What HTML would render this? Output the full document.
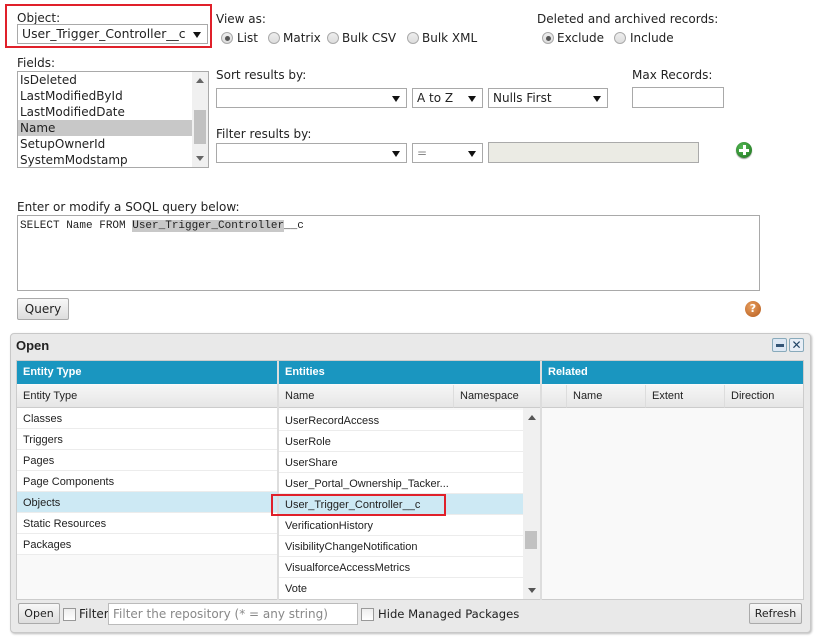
<!DOCTYPE html>
<html><head><style>
*{box-sizing:border-box}
body{margin:0;width:815px;height:644px;background:#fff;position:relative;overflow:hidden;font-family:"DejaVu Sans","Liberation Sans",sans-serif;font-size:12px;color:#222}
.a{position:absolute;white-space:nowrap}
.sel{position:absolute;border:1px solid #a9a9a9;background:#fff;height:20px;font-size:12px;padding:1px 4px;line-height:16px}
.sel:after{content:"";position:absolute;right:6px;top:7px;border-left:4px solid transparent;border-right:4px solid transparent;border-top:6px solid #111}
.rad{position:absolute;width:12px;height:12px;border-radius:50%;border:1px solid #aaa;background:linear-gradient(#eee,#ddd)}
.rad.on:after{content:"";position:absolute;left:2.5px;top:2.5px;width:5px;height:5px;border-radius:50%;background:#555}
.row{position:absolute;height:21px;border-bottom:1px solid #ececec;line-height:22px;padding-left:6px;font-family:"Liberation Sans",sans-serif;font-size:11px}
.hd{position:absolute;top:361px;height:23px;background:#1a96c0;color:#fff;font-weight:bold;font-family:"Liberation Sans",sans-serif;font-size:11px;line-height:22px;padding-left:6px}
.sh{position:absolute;top:385px;height:23px;background:linear-gradient(#f6f6f6,#e6e6e6);border-bottom:1px solid #ccc;font-family:"Liberation Sans",sans-serif;font-size:11px;line-height:23px;padding-left:6px}
.btn{position:absolute;border:1px solid #aaa;border-radius:2px;background:linear-gradient(#f8f8f8,#ddd);text-align:center;font-size:12px}
.cb{position:absolute;width:13px;height:13px;border:1px solid #999;background:linear-gradient(#eee,#fff)}
</style></head><body>
<div class="a" style="left:5px;top:4px;width:207px;height:44px;border:2px solid #e0202a"></div>
<div class="a" style="left:17px;top:11px">Object:</div>
<div class="sel" style="left:17px;top:24px;width:191px;padding-left:4px;font-size:12.4px">User_Trigger_Controller__c</div>
<div class="a" style="left:216px;top:12px">View as:</div>
<div class="rad on" style="left:221px;top:32px"></div><div class="a" style="left:237px;top:31px">List</div>
<div class="rad" style="left:268px;top:32px"></div><div class="a" style="left:283px;top:31px">Matrix</div>
<div class="rad" style="left:327px;top:32px"></div><div class="a" style="left:342px;top:31px">Bulk CSV</div>
<div class="rad" style="left:407px;top:32px"></div><div class="a" style="left:422px;top:31px">Bulk XML</div>
<div class="a" style="left:537px;top:12px">Deleted and archived records:</div>
<div class="rad on" style="left:542px;top:32px"></div><div class="a" style="left:557px;top:31px">Exclude</div>
<div class="rad" style="left:614px;top:32px"></div><div class="a" style="left:630px;top:31px">Include</div>
<div class="a" style="left:17px;top:56px">Fields:</div>
<div class="a" style="left:17px;top:71px;width:192px;height:97px;border:1px solid #a9a9a9;overflow:hidden">
 <div style="position:absolute;left:2px;top:0;line-height:16px">IsDeleted<br>LastModifiedById<br>LastModifiedDate</div>
 <div style="position:absolute;left:0;top:48px;width:174px;height:16px;background:#c8c8c8"></div>
 <div style="position:absolute;left:2px;top:48px;line-height:16px">Name<br>SetupOwnerId<br>SystemModstamp</div>
 <div style="position:absolute;right:0;top:0;width:16px;height:95px;background:#f0f0f0"></div>
 <div style="position:absolute;right:2px;top:38px;width:12px;height:34px;background:#c1c1c1"></div>
 <div style="position:absolute;right:4px;top:6px;border-left:4px solid transparent;border-right:4px solid transparent;border-bottom:5px solid #666"></div>
 <div style="position:absolute;right:4px;bottom:6px;border-left:4px solid transparent;border-right:4px solid transparent;border-top:5px solid #666"></div>
</div>
<div class="a" style="left:216px;top:68px">Sort results by:</div>
<div class="sel" style="left:216px;top:88px;width:191px"></div>
<div class="sel" style="left:412px;top:88px;width:71px">A to Z</div>
<div class="sel" style="left:488px;top:88px;width:120px">Nulls First</div>
<div class="a" style="left:632px;top:68px">Max Records:</div>
<div class="a" style="left:632px;top:87px;width:92px;height:21px;border:1px solid #a9a9a9"></div>
<div class="a" style="left:216px;top:127px">Filter results by:</div>
<div class="sel" style="left:216px;top:143px;width:191px"></div>
<div class="sel" style="left:412px;top:143px;width:71px;color:#888">=</div>
<div class="a" style="left:488px;top:142px;width:211px;height:21px;border:1px solid #aaa;background:#ebebe4"></div>
<div class="a" style="left:736px;top:142px;width:16px;height:16px;border-radius:50%;background:radial-gradient(circle at 40% 35%,#5b5,#1d6e1d);box-shadow:0 1px 1px #999"><div style="position:absolute;left:3px;top:6.5px;width:10px;height:3px;background:#fff"></div><div style="position:absolute;left:6.5px;top:3px;width:3px;height:10px;background:#fff"></div></div>
<div class="a" style="left:17px;top:200px">Enter or modify a SOQL query below:</div>
<div class="a" style="left:17px;top:215px;width:743px;height:76px;border:1px solid #a9a9a9;font-family:'Liberation Mono',monospace;font-size:11px;padding:4px 2px">SELECT Name FROM <span style="background:#c8c8c8">User_Trigger_Controller</span>__c</div>
<div class="btn" style="left:17px;top:298px;width:52px;height:22px;line-height:20px">Query</div>
<div class="a" style="left:745px;top:301px;width:16px;height:16px;border-radius:50%;background:radial-gradient(circle at 40% 35%,#e9a060,#b45a1c);color:#fff;font-weight:bold;font-size:11px;text-align:center;line-height:16px">?</div>

<div class="a" style="left:10px;top:333px;width:801px;height:300px;border:1px solid #c8c8c8;border-radius:4px;background:#e9e9e9;box-shadow:1px 1px 2px #bbb"></div>
<div class="a" style="left:16px;top:338px;font-weight:bold;font-family:'Liberation Sans',sans-serif;font-size:13px">Open</div>
<div class="a" style="left:772px;top:338px;width:15px;height:14px;border:1px solid #8ab;border-radius:2px;background:#dde8f4"><div style="position:absolute;left:3px;top:5px;width:8px;height:3px;background:#357"></div></div>
<div class="a" style="left:789px;top:338px;width:15px;height:14px;border:1px solid #8ab;border-radius:2px;background:#e8eef6;font-size:12px;line-height:12px;text-align:center;color:#246">✕</div>
<div class="a" style="left:16px;top:360px;width:788px;height:240px;background:#f9f9f9;border:1px solid #ccc"></div>
<div class="hd" style="left:17px;width:260px">Entity Type</div>
<div class="hd" style="left:279px;width:261px">Entities</div>
<div class="hd" style="left:542px;width:261px">Related</div>
<div class="a" style="left:277px;top:361px;width:2px;height:239px;background:#ddd"></div>
<div class="a" style="left:540px;top:361px;width:2px;height:239px;background:#ddd"></div>
<div class="sh" style="left:17px;width:260px">Entity Type</div>
<div class="sh" style="left:279px;width:261px">Name</div>
<div class="sh" style="left:453px;width:70px;border-left:1px solid #ddd">Namespace</div>
<div class="sh" style="left:542px;width:261px"></div>
<div class="sh" style="left:566px;width:80px;border-left:1px solid #ddd">Name</div>
<div class="sh" style="left:645px;width:79px;border-left:1px solid #ddd">Extent</div>
<div class="sh" style="left:724px;width:79px;border-left:1px solid #ddd">Direction</div>
<div class="a" style="left:17px;top:408px;width:260px;height:147px;background:#fff"></div>
<div class="row" style="left:17px;top:408px;width:260px">Classes</div>
<div class="row" style="left:17px;top:429px;width:260px">Triggers</div>
<div class="row" style="left:17px;top:450px;width:260px">Pages</div>
<div class="row" style="left:17px;top:471px;width:260px">Page Components</div>
<div class="row" style="left:17px;top:492px;width:260px;background:#cde9f4">Objects</div>
<div class="row" style="left:17px;top:513px;width:260px">Static Resources</div>
<div class="row" style="left:17px;top:534px;width:260px">Packages</div>
<div class="a" style="left:279px;top:410px;width:244px;height:189px;background:#fff"></div>
<div class="row" style="left:279px;top:410px;width:244px">UserRecordAccess</div>
<div class="row" style="left:279px;top:431px;width:244px">UserRole</div>
<div class="row" style="left:279px;top:452px;width:244px">UserShare</div>
<div class="row" style="left:279px;top:473px;width:244px">User_Portal_Ownership_Tacker...</div>
<div class="row" style="left:279px;top:494px;width:244px;background:#cde9f4">User_Trigger_Controller__c</div>
<div class="row" style="left:279px;top:515px;width:244px">VerificationHistory</div>
<div class="row" style="left:279px;top:536px;width:244px">VisibilityChangeNotification</div>
<div class="row" style="left:279px;top:557px;width:244px">VisualforceAccessMetrics</div>
<div class="row" style="left:279px;top:578px;width:244px;border:0">Vote</div>
<div class="a" style="left:271px;top:494px;width:175px;height:22px;border:2px solid #e0202a"></div>
<div class="a" style="left:523px;top:408px;width:17px;height:191px;background:#f0f0f0"></div>
<div class="a" style="left:525px;top:531px;width:12px;height:18px;background:#c1c1c1"></div>
<div class="a" style="left:528px;top:415px;border-left:4px solid transparent;border-right:4px solid transparent;border-bottom:5px solid #555"></div>
<div class="a" style="left:528px;top:588px;border-left:4px solid transparent;border-right:4px solid transparent;border-top:5px solid #555"></div>
<div class="btn" style="left:18px;top:603px;width:42px;height:21px;line-height:19px;font-size:11px">Open</div>
<div class="cb" style="left:63px;top:608px"></div>
<div class="a" style="left:79px;top:607px;font-size:12px">Filter</div>
<div class="a" style="left:108px;top:603px;width:250px;height:22px;border:1px solid #bbb;background:#fff;color:#888;font-size:12px;padding:3px 4px">Filter the repository (* = any string)</div>
<div class="cb" style="left:361px;top:608px"></div>
<div class="a" style="left:378px;top:607px;font-size:11.6px">Hide Managed Packages</div>
<div class="btn" style="left:749px;top:603px;width:53px;height:21px;line-height:19px;font-size:11px">Refresh</div>
</body></html>
